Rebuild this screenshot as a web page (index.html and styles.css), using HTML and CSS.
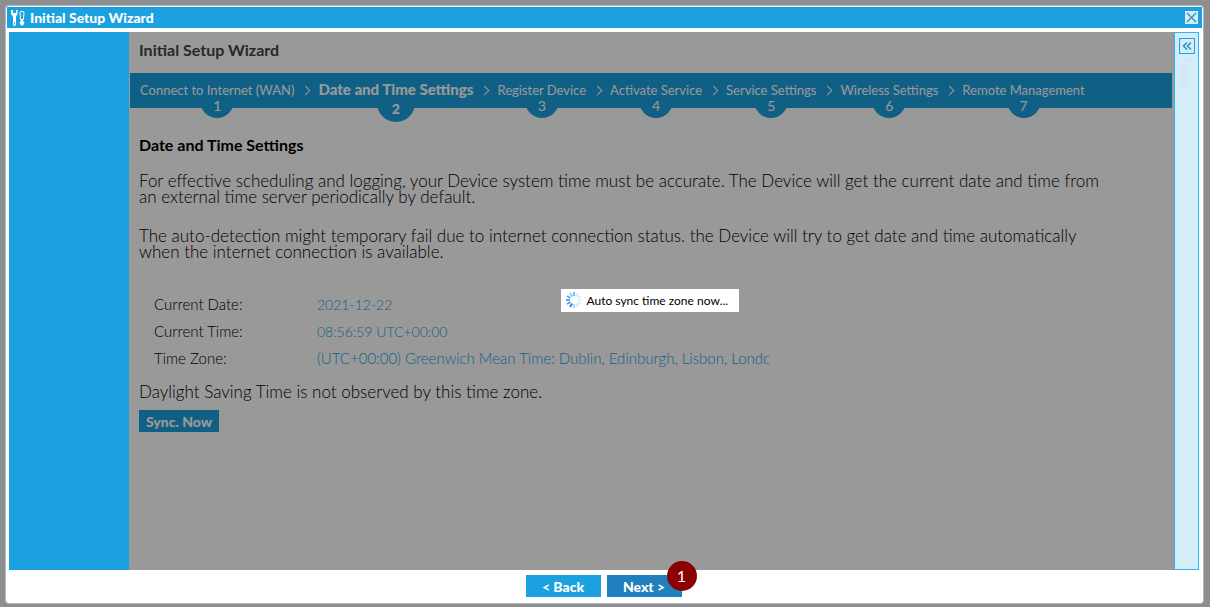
FILE: index.html
```html
<!DOCTYPE html>
<html lang="en">
<head>
    <meta charset="utf-8">
    <title>Initial Setup Wizard</title>
    <link rel="stylesheet" href="styles.css">
</head>
<body>
    <div class="dialog">
        <div class="titlebar">
            <svg class="title-icon" width="16" height="16" viewBox="0 0 16 16" fill="#fff">
                <path d="M1 0v4l2 2.500v7.500q0 2 1.500 2t1.500-2V6.500L7.500 4V0H6v3H3V0z"/>
                <path d="M4.500 12.500v2" stroke="#1ba1df" stroke-width="1"/>
                <path d="M11 1.500h2q1 0 1 1.500l-.6 6.500h-2.800L10 3q0-1.500 1-1.500z" fill="none" stroke="#fff" stroke-width="1"/>
                <path d="M11 9h2v1.500l1.500 2-1.500 3h-2l-1.500-3 1.500-2z"/>
            </svg>
            <span class="title-text">Initial Setup Wizard</span>
            <button class="icon-button close" aria-label="Close">
                <svg width="13" height="13" viewBox="0 0 13 13"><path d="M2 2l9 9M11 2l-9 9" stroke="#3d93bf" stroke-width="1.500" fill="none"/></svg>
            </button>
        </div>

        <div class="content">
            <div class="sidebar"></div>

            <div class="main">
                <h1>Initial Setup Wizard</h1>

                <ol class="steps">
                    <li class="step">Connect to Internet (WAN)<span class="num">1</span></li>
                    <li class="step active">Date and Time Settings<span class="num">2</span></li>
                    <li class="step">Register Device<span class="num">3</span></li>
                    <li class="step">Activate Service<span class="num">4</span></li>
                    <li class="step">Service Settings<span class="num">5</span></li>
                    <li class="step">Wireless Settings<span class="num">6</span></li>
                    <li class="step">Remote Management<span class="num">7</span></li>
                </ol>

                <div class="page">
                    <h2>Date and Time Settings</h2>
                    <p>For effective scheduling and logging, your Device system time must be accurate. The Device will get the current date and time from<br>an external time server periodically by default.</p>
                    <p>The auto-detection might temporary fail due to internet connection status. the Device will try to get date and time automatically<br>when the internet connection is available.</p>

                    <dl class="info">
                        <dt>Current Date:</dt>
                        <dd class="digits">2021-12-22</dd>
                        <dt>Current Time:</dt>
                        <dd class="digits">08:56:59 UTC+00:00</dd>
                        <dt>Time Zone:</dt>
                        <dd>(UTC+00:00) Greenwich Mean Time: Dublin, Edinburgh, Lisbon, London</dd>
                    </dl>

                    <p class="dst">Daylight Saving Time is not observed by this time zone.</p>
                    <button class="button sync">Sync. Now</button>
                </div>

                <div class="mask"></div>
            </div>

            <div class="help">
                <button class="icon-button expand" aria-label="Expand help">
                    <svg width="14" height="14" viewBox="0 0 14 14"><path d="M7 3.500L3.500 7L7 10.500M11 3.500L7.500 7L11 10.500" stroke="#2b8fc4" stroke-width="1.500" fill="none"/></svg>
                </button>
                <span class="help-text">Help</span>
            </div>
        </div>

        <div class="footer">
            <button class="button">&lt; Back</button>
            <div class="next-wrap">
                <button class="button next">Next &gt;</button>
                <span class="badge">1</span>
            </div>
        </div>

        <div class="loading" role="status">
            <svg width="16" height="16" viewBox="0 0 16 16" stroke-width="2" fill="none">
                <path d="M8 0v4" stroke="#5cc4f8"/>
                <path d="M12 1L10 4.500" stroke="#c8ecfd"/>
                <path d="M15 4l-3.500 2" stroke="#d8f1fd"/>
                <path d="M16 8h-4" stroke="#e0f4fe"/>
                <path d="M15 12l-3.500-2" stroke="#d8f1fd"/>
                <path d="M12 15l-2-3.500" stroke="#c8ecfd"/>
                <path d="M8 16v-4" stroke="#a5d4fb"/>
                <path d="M4 15l2-3.500" stroke="#3a78f0"/>
                <path d="M1 12l3.500-2" stroke="#4e9af5"/>
                <path d="M0 8h4" stroke="#4aa8f5"/>
                <path d="M1 4l3.500 2" stroke="#55b5f7"/>
                <path d="M4 1l2 3.500" stroke="#7dd0fa"/>
            </svg>
            Auto sync time zone now...
        </div>
    </div>
</body>
</html>
```
FILE: styles.css
```css
* {
    box-sizing: border-box;
}
body {
    margin: 0;
    min-height: 100vh;
    padding: 5px 6px 3px 5px;
    display: flex;
    background-color: #8e8e8e;
    font-family: "Century Gothic", Lato, sans-serif;
    font-size: 17px;
    font-weight: 300;
    color: #000;
}
.dialog {
    position: relative;
    flex: 1;
    display: flex;
    flex-direction: column;
    padding: 1px;
    background: white;
    border: 1px solid #a9bcd3;
    border-radius: 4px;
}
.titlebar {
    display: flex;
    align-items: center;
    gap: 4px;
    height: 21px;
    padding: 0 4px 0 3px;
    background-color: #1ba1df;
    color: white;
}
.title-text {
    flex: 1;
    font-size: 14px;
    font-weight: 900;
}
.icon-button {
    display: flex;
    padding: 0;
    border: none;
    cursor: pointer;
}
.close {
    background-color: #d3eef8;
}
.content {
    flex: 1;
    display: flex;
    margin: 4px 3px 0 2px;
}
.sidebar {
    width: 120px;
    background-color: #1ba1df;
}
.main {
    position: relative;
    flex: 1;
    padding: 0 2px 0 1px;
    background: white;
}
.mask {
    position: absolute;
    inset: 0;
    background-color: rgba(0,0,0,0.4);
}
h1 {
    margin: 0;
    padding: 8px 9px 13px;
    font-size: 16px;
    line-height: 20px;
    font-weight: 700;
    color: #444;
}
.steps {
    display: flex;
    height: 35px;
    margin: 0;
    padding: 0 10px;
    list-style: none;
    background-color: #1ba1df;
    color: white;
    font-size: 13px;
    line-height: 35px;
    font-weight: 400;
    white-space: nowrap;
}
.step {
    position: relative;
}
.step + .step {
    margin-left: 24px;
}
.step + .step::before {
    content: "";
    position: absolute;
    left: -16px;
    top: 14px;
    width: 6px;
    height: 6px;
    border: solid white;
    border-width: 1px 1px 0 0;
    transform: rotate(45deg);
}
.active {
    font-size: 15px;
    line-height: 33px;
    font-weight: 900;
}
.num {
    position: absolute;
    left: 50%;
    top: 11px;
    width: 34px;
    height: 34px;
    margin-left: -17px;
    border-radius: 50%;
    background: linear-gradient(transparent 24px, #1ba1df 24px);
    font-size: 14px;
    line-height: 44px;
    text-align: center;
}
.active .num {
    height: 38px;
    width: 38px;
    margin-left: -19px;
    line-height: 50px;
}
.page {
    padding: 29px 9px;
}
h2 {
    margin: 0 0 20px;
    font-size: 16px;
    line-height: 16px;
    font-weight: 700;
}
p {
    margin: 0 0 23px;
    line-height: 16px;
}
.info {
    display: grid;
    grid-template-columns: 163px 452px;
    margin: 31px 0 12px 15px;
    font-size: 15px;
    line-height: 27px;
}
.info dd {
    margin: 0;
    overflow: hidden;
    white-space: nowrap;
    color: #1ba1df;
}
.info .digits {
    font-size: 14px;
}
.dst {
    margin-bottom: 10px;
}
.button {
    width: 75px;
    height: 22px;
    padding: 0;
    border: none;
    background-color: #1ba1df;
    color: white;
    font-family: inherit;
    font-size: 14px;
    font-weight: 900;
    cursor: pointer;
}
.sync {
    display: block;
    width: 80px;
}
.next {
    background-color: #2080bd;
}
.help {
    display: flex;
    flex-direction: column;
    align-items: center;
    gap: 4px;
    width: 25px;
    padding-top: 5px;
    background-color: #d3eef8;
    border: 1px solid #2bb5f5;
}
.expand {
    border: 1px solid #2b9fd9;
    background: none;
}
.help-text {
    writing-mode: vertical-rl;
    font-size: 14px;
    font-weight: 700;
    color: #d3e6f5;
}
.footer {
    display: flex;
    justify-content: center;
    gap: 6px;
    padding: 5px 2px 5px 0;
}
.next-wrap {
    position: relative;
}
.next-wrap .button {
    display: block;
}
.badge {
    position: absolute;
    right: -15px;
    top: -14px;
    width: 30px;
    height: 30px;
    border-radius: 50%;
    background-color: #8b0000;
    color: white;
    font-size: 16px;
    line-height: 29px;
    font-weight: 400;
    text-align: center;
}
.loading {
    position: absolute;
    left: calc(50% - 44px);
    top: calc(50% - 16px);
    display: flex;
    align-items: center;
    gap: 5px;
    width: 178px;
    height: 23px;
    padding: 0 5px;
    background: white;
    font-size: 12px;
    font-weight: 400;
    white-space: nowrap;
}
```
